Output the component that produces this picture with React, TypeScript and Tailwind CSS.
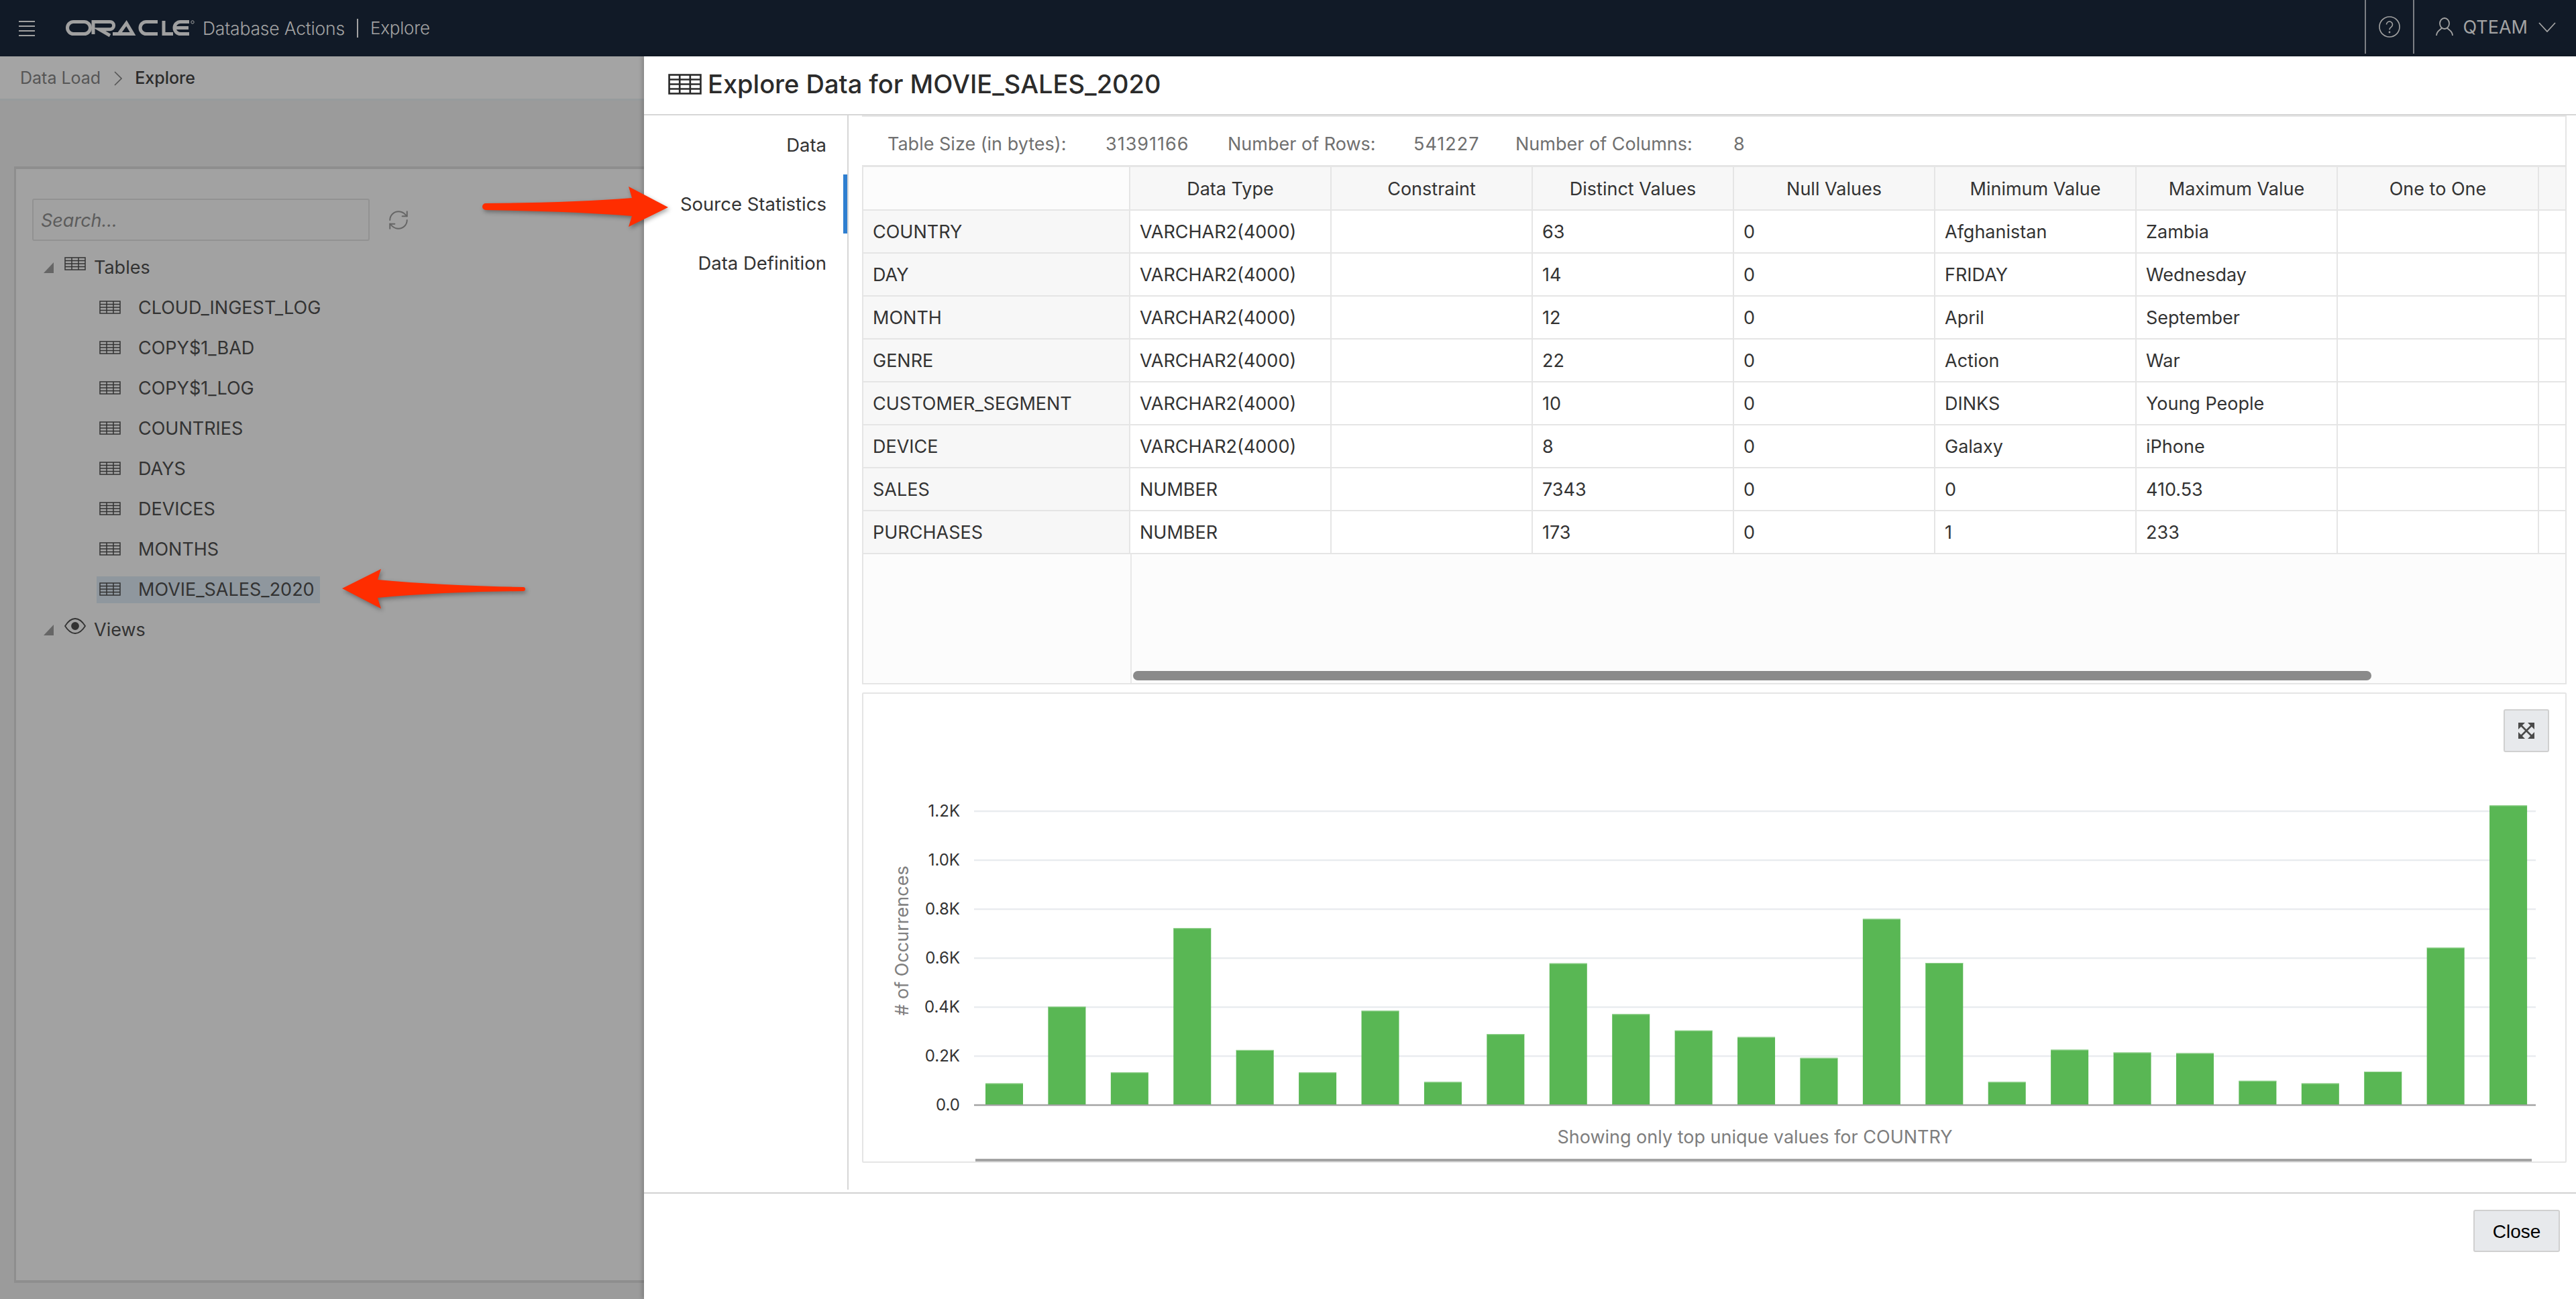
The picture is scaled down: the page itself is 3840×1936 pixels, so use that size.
import React from "react";
import { RefreshCw } from "lucide-react";

const treeItems = ["CLOUD_INGEST_LOG", "COPY$1_BAD", "COPY$1_LOG", "COUNTRIES", "DAYS", "DEVICES", "MONTHS", "MOVIE_SALES_2020"];
const headers = ["", "Data Type", "Constraint", "Distinct Values", "Null Values", "Minimum Value", "Maximum Value", "One to One", ""];
const rows = [
  ["COUNTRY", "VARCHAR2(4000)", "", "63", "0", "Afghanistan", "Zambia", "", ""],
  ["DAY", "VARCHAR2(4000)", "", "14", "0", "FRIDAY", "Wednesday", "", ""],
  ["MONTH", "VARCHAR2(4000)", "", "12", "0", "April", "September", "", ""],
  ["GENRE", "VARCHAR2(4000)", "", "22", "0", "Action", "War", "", ""],
  ["CUSTOMER_SEGMENT", "VARCHAR2(4000)", "", "10", "0", "DINKS", "Young People", "", ""],
  ["DEVICE", "VARCHAR2(4000)", "", "8", "0", "Galaxy", "iPhone", "", ""],
  ["SALES", "NUMBER", "", "7343", "0", "0", "410.53", "", ""],
  ["PURCHASES", "NUMBER", "", "173", "0", "1", "233", "", ""],
];
const bars = [31.4, 145.7, 47.7, 262.7, 81.1, 47.7, 139.6, 33.5, 104.8, 210.3, 134.6, 110.2, 100.4, 69.3, 276.5, 211, 33.5, 81.5, 77.4, 76.4, 35.2, 31.4, 49, 233.6, 445.6];
const ticks = ["0.0", "0.2K", "0.4K", "0.6K", "0.8K", "1.0K", "1.2K"];

function GridIcon({ w, h, sw }: { w: number; h: number; sw: number }) {
  return (
    <svg width={w} height={h} viewBox="0 0 32 20" preserveAspectRatio="none" fill="none" stroke="currentColor" strokeWidth={sw} className="shrink-0">
      <rect x="1" y="1" width="30" height="18" />
      <path d="M1 5.5H31M1 10H31M1 14.5H31M11 1V19M21 1V19" />
    </svg>
  );
}

function Tri() {
  return (
    <svg width="15" height="16" viewBox="0 0 15 16" className="shrink-0 text-[#666]" fill="currentColor">
      <path d="M15 0V16H0Z" />
    </svg>
  );
}

function OracleLogo() {
  return (
    <svg width="194" height="26" viewBox="0 0 194 26" fill="none" stroke="#a0a0a0" strokeWidth="5" className="shrink-0">
      <rect x="2.5" y="3.5" width="34" height="18" rx="9" />
      <path d="M41 22V3.5H66a5.6 5.6 0 0 1 0 11.2H50L66 24" />
      <path d="M70 21.5H100L90.5 5.5 79 21.5" />
      <path d="M137 3.5H120a9 9 0 0 0 0 18H137" />
      <path d="M146 2V21.5H160" />
      <path d="M184 3.5H171a9 9 0 0 0 0 18H184M162 12.5H183" />
      <circle cx="189" cy="4" r="2.2" strokeWidth="1" />
    </svg>
  );
}

export default function App() {
  return (
    <div className="relative w-[3840px] h-[1936px] overflow-hidden flex flex-col bg-[#9e9e9e] font-['Inter','Noto_Sans',sans-serif] text-[27px] text-[#333]">
      <header className="h-[84px] shrink-0 bg-[#111a27] flex items-center text-[#a3a3a3]">
        <div className="ml-[28px] w-[24px] flex flex-col gap-[5px] shrink-0">
          <span className="h-[2px] bg-[#a0a0a0]" />
          <span className="h-[2px] bg-[#a0a0a0]" />
          <span className="h-[2px] bg-[#a0a0a0]" />
          <span className="h-[2px] bg-[#a0a0a0]" />
        </div>
        <div className="ml-[46px]"><OracleLogo /></div>
        <span className="ml-[10px] text-[26.5px] leading-none font-light tracking-[-0.2px]">Database Actions</span>
        <span className="ml-[18px] h-[28px] w-[2px] bg-[#a3a3a3]" />
        <span className="ml-[18px] text-[26px] leading-none font-light tracking-[-0.2px]">Explore</span>
        <div className="ml-auto flex h-[80px] self-start items-center">
          <div className="h-full w-[74px] border-x-2 border-[#7c7f84] flex items-center justify-center">
            <svg width="32" height="32" viewBox="0 0 32 32" fill="none" stroke="#a3a3a3" strokeWidth="1.6">
              <circle cx="16" cy="16" r="15" />
              <path d="M11.5 12.5a4.5 4.5 0 1 1 7 3.8c-1.5 1-2.5 2-2.5 4" />
              <circle cx="16" cy="24" r="0.6" />
            </svg>
          </div>
          <svg className="ml-[32px]" width="26" height="28" viewBox="0 0 26 28" fill="none" stroke="#a3a3a3" strokeWidth="1.8">
            <ellipse cx="13" cy="9" rx="7" ry="8" />
            <path d="M9 15.5C7 19 1 20 1 27M17 15.5C19 19 25 20 25 27" />
          </svg>
          <span className="ml-[14px] text-[27px] leading-none">QTEAM</span>
          <svg className="ml-[16px] mr-[30px]" width="26" height="15" viewBox="0 0 26 15" fill="none" stroke="#a3a3a3" strokeWidth="1.8">
            <path d="M1 1L13 14L25 1" />
          </svg>
        </div>
      </header>

      <div className="flex-1 flex min-h-0">
        <div className="w-[960px] shrink-0 flex flex-col bg-[#9b9b9b]">
          <div className="h-[66px] shrink-0 bg-[#a4a4a4] border-b-[3px] border-[#979b9d] flex items-center pl-[30px] pt-[2px] text-[25px] text-[#565656]">
            <span>Data Load</span>
            <svg className="ml-[20px]" width="12" height="22" viewBox="0 0 12 22" fill="none" stroke="#555" strokeWidth="1.6"><path d="M1 1L11 11L1 21" /></svg>
            <span className="ml-[19px] text-[#2b2b2b] font-medium">Explore</span>
          </div>
          <div className="mt-[98px] ml-[21px] h-[1664px] shrink-0 border-l-[3px] border-t-[4px] border-b-[4px] border-[#8e8e8e] bg-[#a2a2a2] pl-[24px] pt-[44px]">
            <div className="flex items-center">
              <div className="w-[503px] h-[63px] border-2 border-[#929292] rounded-[3px] bg-[#a1a1a1] flex items-center pl-[11px] pt-[3px] italic text-[27px] text-[#5c5c5c]">Search...</div>
              <RefreshCw className="ml-[26px] text-[#666]" size={34} strokeWidth={1.4} />
            </div>
            <div className="mt-[20px] ml-[17px] flex items-center h-[40px]">
              <Tri />
              <span className="ml-[16px] -mt-[12px] text-[#333]"><GridIcon w={32} h={20} sw={1.5} /></span>
              <span className="ml-[12px]">Tables</span>
            </div>
            <div className="mt-[20px] ml-[96px] flex flex-col gap-[20px] items-start">
              {treeItems.map((t, i) => (
                <div key={t} className={`h-[40px] flex items-center pl-[4px] pr-[8px] ${i === 7 ? "bg-[#8f979e]" : ""}`}>
                  <span className="text-[#333] -mt-[2px]"><GridIcon w={32} h={20} sw={1.5} /></span>
                  <span className="ml-[26px] whitespace-nowrap">{t}</span>
                </div>
              ))}
            </div>
            <div className="mt-[20px] ml-[17px] flex items-center h-[40px]">
              <Tri />
              <svg className="ml-[16px] -mt-[12px] shrink-0" width="32" height="24" viewBox="0 0 32 24" fill="none" stroke="#333" strokeWidth="1.8">
                <path d="M1 12C6 4 11 1 16 1s10 3 15 11c-5 8-10 11-15 11S6 20 1 12Z" />
                <circle cx="16" cy="12" r="5" fill="#333" />
              </svg>
              <span className="ml-[12px]">Views</span>
            </div>
          </div>
        </div>

        <div className="w-[2880px] shrink-0 bg-white flex flex-col shadow-[-3px_0_6px_rgba(0,0,0,0.18)]">
          <div className="h-[88px] shrink-0 border-b-2 border-[#d6d6d6] flex items-center pl-[36px] pb-[4px] text-[38px] font-medium text-[#2b2b2b]">
            <GridIcon w={50} h={31} sw={1.7} />
            <span className="ml-[9px] whitespace-nowrap">Explore Data for MOVIE_SALES_2020</span>
          </div>
          <div className="flex h-[1601px] mb-[4px] shrink-0">
            <div className="w-[305px] shrink-0 border-r-2 border-[#d6d6d6] flex flex-col text-[27.5px] text-right">
              <div className="h-[88px] pr-[31px] pt-[2px] flex items-center justify-end">Data</div>
              <div className="h-[88px] pr-[25px] pt-[2px] flex items-center justify-end border-r-[6px] border-[#2f7fd0]">Source Statistics</div>
              <div className="h-[88px] pr-[31px] pt-[2px] flex items-center justify-end">Data Definition</div>
            </div>
            <div className="ml-[20px] w-[2541px] shrink-0 flex flex-col">
              <div className="h-[77px] shrink-0 border-t-2 border-r-2 border-b-[3px] border-[#e5e5e5] flex items-center pl-[38px] pt-[11px] text-[#707070]">
                <span className="w-[325px]">Table Size (in bytes):</span>
                <span className="w-[182px] tracking-[1px]">31391166</span>
                <span className="w-[277px]">Number of Rows:</span>
                <span className="w-[152px] tracking-[1px]">541227</span>
                <span className="w-[325px]">Number of Columns:</span>
                <span>8</span>
              </div>
              <div className="h-[771px] shrink-0 border-x-2 border-b-2 border-[#e5e5e5] flex flex-col bg-[#fcfcfc]">
                <div className="grid grid-cols-[398px_repeat(7,300px)_1fr]">
                  {headers.map((h, i) => (
                    <div key={i} className={`h-[65px] pt-[4px] border-b-2 border-[#e5e5e5] flex items-center justify-center ${i === 8 ? "" : "border-r-2"} ${i === 0 ? "bg-[#fcfcfc]" : "bg-[#f7f7f7]"}`}>{h}</div>
                  ))}
                  {rows.flat().map((c, i) => (
                    <div key={i} className={`h-[64px] pt-[2px] border-b-2 border-[#e5e5e5] flex items-center pl-[14px] whitespace-nowrap ${i % 9 === 8 ? "" : "border-r-2"} ${i % 9 === 0 ? "bg-[#f7f7f7]" : "bg-white"}`}>{c}</div>
                  ))}
                </div>
                <div className="relative flex-1">
                  <div className="ml-[398px] h-full w-[2px] bg-[#e8e8e8]" />
                  <div className="absolute left-[402px] bottom-[4px] w-[1846px] h-[14px] rounded-[7px] bg-[#8a8a8a]" />
                </div>
              </div>
              <div className="relative mt-[12px] h-[701px] shrink-0 border-2 border-[#e5e5e5] rounded-[2px] bg-white">
                <svg className="block w-full h-full" viewBox="1287 1034 2537 697" preserveAspectRatio="none">
                  {ticks.map((t, i) => (
                    <g key={t}>
                      <line x1="1452" x2="3780" y1={1647 - i * 73} y2={1647 - i * 73} stroke={i === 0 ? "#a3a3a3" : "#e9ecef"} strokeWidth="2.5" />
                      <text x="1431" y={1647 - i * 73 + 8} textAnchor="end" fontSize="24" fill="#333">{t}</text>
                    </g>
                  ))}
                  {bars.map((h, i) => (
                    <g key={i}>
                      <rect x={1469 + i * 93.42} y={1646 - h} width="56" height={h} fill="#59b754" />
                      <rect x={1469 + i * 93.42} y={1646 - h} width="56" height="1" fill="#9ad596" />
                    </g>
                  ))}
                  <text x="1354" y="1402" textAnchor="middle" fontSize="27" fill="#808080" transform="rotate(-90 1354 1402)">{"# of Occurrences"}</text>
                  <text x="2616" y="1704" textAnchor="middle" fontSize="27" fill="#7e7e7e">Showing only top unique values for COUNTRY</text>
                  <rect x="1454" y="1727" width="2320" height="4" fill="#a3a3a3" />
                </svg>
                <button className="absolute top-[23px] right-[24px] w-[68px] h-[64px] bg-[#e7e9ec] border-2 border-[#d0d0d0] rounded-[3px] flex items-center justify-center">
                  <svg width="26" height="26" viewBox="0 0 26 26" fill="none" stroke="#4a4a4a" strokeWidth="2.6">
                    <path d="M4 4L22 22M22 4L4 22" />
                    <path d="M1 1H11L1 11ZM25 1H15L25 11ZM1 25H11L1 15ZM25 25H15L25 15Z" fill="#4a4a4a" stroke="none" />
                  </svg>
                </button>
              </div>
            </div>
          </div>
          <div className="flex-1 border-t-2 border-[#d2d2d2] flex items-start justify-end pr-[24px] pt-[24px]">
            <button className="w-[129px] h-[63px] pt-[2px] bg-[#e7e9ec] border-2 border-[#d0d0d0] rounded-[3px] font-['Liberation_Sans',sans-serif] text-[28px] text-black">Close</button>
          </div>
        </div>
      </div>

      <svg className="absolute left-0 top-0 pointer-events-none drop-shadow-[2px_3px_3px_rgba(0,0,0,0.35)]" width="1100" height="960" viewBox="0 0 1100 960">
        <path d="M724 303Q860 302 942 295L937 278L996 309L937 338L942 322Q860 315 724 313A5 5 0 0 1 724 303Z" fill="#ff2d00" />
        <path d="M780 875Q660 873 563 864L568 848L510 877L568 907L563 891Q660 882 780 881A3 3 0 0 0 780 875Z" fill="#ff2d00" />
      </svg>
    </div>
  );
}
